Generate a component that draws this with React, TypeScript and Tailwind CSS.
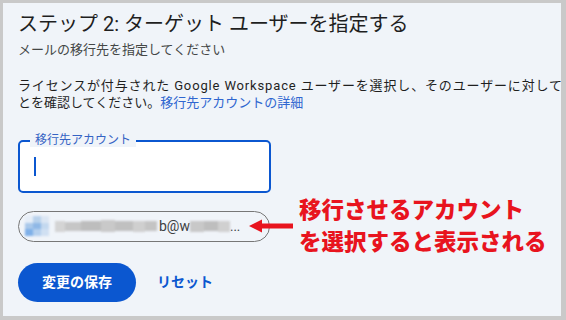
import React from "react";

const FONT = 'Roboto, "Noto Sans CJK JP", "Noto Sans", sans-serif';

function BlurBlock({ w, h, c, className = "" }: { w: number; h: number; c: string; className?: string }) {
  return <div className={"shrink-0 " + className} style={{ width: w, height: h, background: c }} />;
}

export default function App() {
  return (
    <div
      className="w-[566px] h-[320px] bg-[#c9c9c9] pl-[3px] pt-[3px] pr-[5px] pb-[4px] overflow-hidden"
      style={{ fontFamily: FONT }}
    >
      <div className="w-full h-full bg-[#f0f4f9] overflow-hidden pl-[15px] pt-[8px] flex flex-col">
        <div className="text-[20px] leading-[26px] text-[#1f1f1f] whitespace-nowrap">
          ステップ 2: ターゲット ユーザーを指定する
        </div>
        <div className="mt-[4px] text-[13px] leading-[18px] text-[#444746] whitespace-nowrap">
          メールの移行先を指定してください
        </div>
        <div className="mt-[18px] text-[13px] leading-[17px] text-[#1f1f1f] whitespace-nowrap">
          <div className="tracking-[0.85px]">ライセンスが付与された Google Workspace ユーザーを選択し、そのユーザーに対して</div>
          <div>
            とを確認してください。<span className="text-[#2f66d0]">移行先アカウントの詳細</span>
          </div>
        </div>

        <div className="mt-[29px] relative w-[253px] h-[53px] rounded-[5px] border-2 border-[#0b57d0] bg-white flex items-center pl-[14px]">
          <div className="absolute left-[10px] top-[-9px] px-[5px] bg-[#f0f4f9] text-[12px] leading-[14px] text-[#3563c4] whitespace-nowrap">
            移行先アカウント
          </div>
          <div className="w-[1.5px] h-[19px] bg-[#0b57d0]" />
        </div>

        <div className="mt-[1px] h-[64px] flex items-center">
          <div className="w-[252px] h-[31px] rounded-full border border-[#777] flex items-center pl-[6px] overflow-hidden shrink-0">
            <div className="w-[24px] h-[20px] grid grid-cols-3 grid-rows-3 blur-[1px] shrink-0">
              <div className="bg-[#e6eef8]" />
              <div className="bg-[#b9d2ec]" />
              <div className="bg-[#dbe6f3]" />
              <div className="bg-[#a9c8ea]" />
              <div className="bg-[#8fb8e6]" />
              <div className="bg-[#c3d8ef]" />
              <div className="bg-[#7fb0e8]" />
              <div className="bg-[#b5d0ee]" />
              <div className="bg-[#d0e0f2]" />
            </div>
            <div className="ml-[6px] flex items-center blur-[0.8px]">
              <BlurBlock w={10} h={11} c="#d4d4d4" />
              <BlurBlock w={16} h={9} c="#c6c6c6" />
              <BlurBlock w={20} h={10} c="#bdbdbd" />
              <BlurBlock w={14} h={12} c="#c9c9c9" />
              <BlurBlock w={18} h={10} c="#c0c0c0" />
              <BlurBlock w={12} h={11} c="#cfcfcf" />
              <BlurBlock w={12} h={10} c="#c4c4c4" />
            </div>
            <span className="ml-[2px] text-[14px] text-[#3c4043] leading-none">b@w</span>
            <div className="flex items-center blur-[0.8px]">
              <BlurBlock w={14} h={11} c="#c8c8c8" />
              <BlurBlock w={14} h={10} c="#bebebe" />
              <BlurBlock w={12} h={11} c="#d0d0d0" />
            </div>
            <span className="text-[13px] text-[#3c4043] leading-none">...</span>
          </div>
          <svg width="44" height="16" viewBox="0 0 44 16" className="ml-[-21px] shrink-0">
            <rect x="10" y="5.5" width="34" height="5" fill="#e8141e" />
            <polygon points="0,8 13,1.5 13,14.5" fill="#e8141e" />
          </svg>
          <div className="ml-[6px] text-[22.5px] leading-[32px] font-black text-[#e8141e] whitespace-nowrap">
            <div>移行させるアカウント</div>
            <div>を選択すると表示される</div>
          </div>
        </div>

        <div className="mt-[5px] flex items-center">
          <button className="w-[118px] h-[39px] rounded-full bg-[#0b57d0] text-white text-[14px] font-bold">
            変更の保存
          </button>
          <span className="ml-[21px] text-[14px] font-bold text-[#0b57d0]">リセット</span>
        </div>
      </div>
    </div>
  );
}
